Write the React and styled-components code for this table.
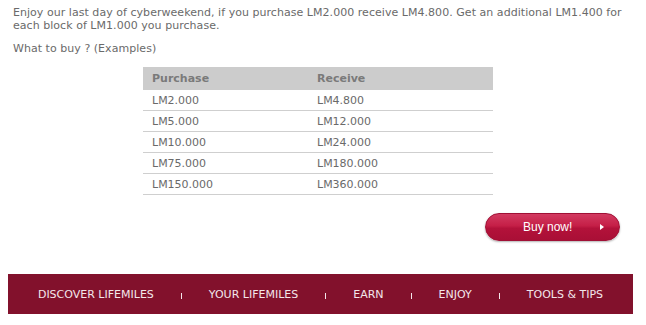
import React from 'react';
import styled, { createGlobalStyle } from 'styled-components';

const GlobalStyle = createGlobalStyle`
  body {
    margin: 0;
    background: #fff;
    font-family: "DejaVu Sans", Verdana, sans-serif;
  }
`;

const rows = [
  ['LM2.000', 'LM4.800'],
  ['LM5.000', 'LM12.000'],
  ['LM10.000', 'LM24.000'],
  ['LM75.000', 'LM180.000'],
  ['LM150.000', 'LM360.000'],
];

const navItems = ['DISCOVER LIFEMILES', 'YOUR LIFEMILES', 'EARN', 'ENJOY', 'TOOLS & TIPS'];

const App = () => (
  <Page>
    <GlobalStyle />
    <Content>
      <Intro>
        Enjoy our last day of cyberweekend, if you purchase LM2.000 receive LM4.800. Get an additional LM1.400 for
        <br />
        each block of LM1.000 you purchase.
      </Intro>
      <Intro>What to buy ? (Examples)</Intro>
      <Table>
        <colgroup>
          <col style={{ width: 165 }} />
          <col style={{ width: 185 }} />
        </colgroup>
        <thead>
          <tr>
            <Th>Purchase</Th>
            <Th>Receive</Th>
          </tr>
        </thead>
        <tbody>
          {rows.map(([a, b]) => (
            <tr key={a}>
              <Td>{a}</Td>
              <Td>{b}</Td>
            </tr>
          ))}
        </tbody>
      </Table>
      <ButtonRow>
        <BuyButton>
          <span>Buy now!</span>
          <Arrow />
        </BuyButton>
      </ButtonRow>
    </Content>
    <Nav>
      {navItems.map((item, i) => (
        <React.Fragment key={item}>
          {i > 0 && <Sep />}
          <NavItem>{item}</NavItem>
        </React.Fragment>
      ))}
    </Nav>
  </Page>
);

export default App;

const Page = styled.div`
  width: 646px;
  height: 325px;
  overflow: hidden;
`;

const Content = styled.div`
  padding: 6px 13px 0 13px;
`;

const Intro = styled.p`
  margin: 0 0 10px;
  font-size: 11px;
  line-height: 13px;
  color: #6a6a6a;
  letter-spacing: 0.04px;
  white-space: nowrap;
`;

const Table = styled.table`
  margin: 12px 0 0 130px;
  width: 350px;
  table-layout: fixed;
  border-collapse: collapse;
  font-size: 11px;
  color: #6a6a6a;
`;

const Th = styled.th`
  background: #cccccc;
  text-align: left;
  font-weight: bold;
  color: #7a7a7a;
  height: 23px;
  padding: 0 0 0 9px;
`;

const Td = styled.td`
  height: 20px;
  padding: 0 0 0 9px;
  border-bottom: 1px solid #cfcfcf;
`;

const ButtonRow = styled.div`
  display: flex;
  justify-content: flex-end;
  padding: 18px 13px 0 0;
`;

const BuyButton = styled.button`
  width: 135px;
  height: 28px;
  border: 1px solid #a01035;
  border-radius: 14px;
  background: linear-gradient(#d23a60 0%, #c51f47 45%, #b3123a 55%, #a90f36 100%);
  box-shadow: 0 1px 2px rgba(0, 0, 0, 0.3);
  color: #fff;
  font-family: "Liberation Sans", Arial, sans-serif;
  font-size: 12px;
  display: flex;
  align-items: center;
  padding: 0 15px 0 37px;
  justify-content: space-between;
  cursor: pointer;
`;

const Arrow = styled.span`
  width: 0;
  height: 0;
  border-top: 3px solid transparent;
  border-bottom: 3px solid transparent;
  border-left: 4px solid #fff;
`;

const Nav = styled.nav`
  margin: 33px 13px 0 8px;
  height: 40px;
  background: #82112c;
  display: flex;
  align-items: center;
  justify-content: center;
`;

const NavItem = styled.span`
  color: #f3e6ea;
  font-size: 11px;
  padding: 0 27px;
`;

const Sep = styled.span`
  width: 1px;
  height: 6px;
  background: #f3e6ea;
  margin-top: 3px;
`;
